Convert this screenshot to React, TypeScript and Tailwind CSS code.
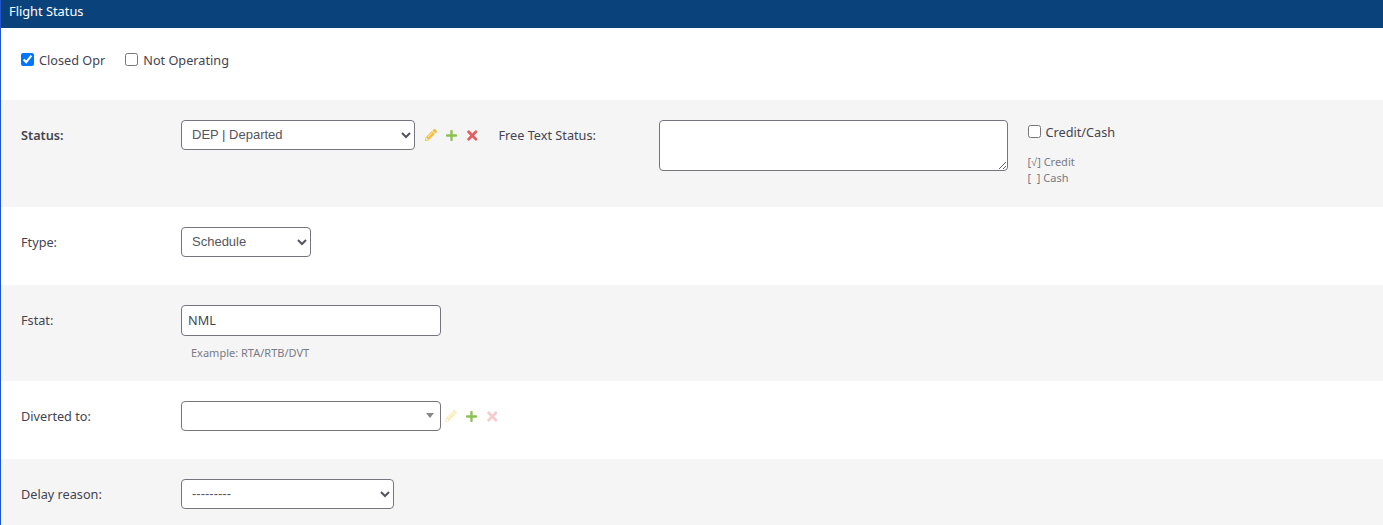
import { FaPencilAlt, FaPlus, FaTimes } from "react-icons/fa";

const labelCls = "w-[160px] shrink-0 text-[12.7px] leading-[20px] text-[#444450]";
const selectCls =
  "h-[30px] rounded-[4px] border border-[#76757f] bg-white pl-[6px] pb-[2px] text-[13px] text-[#555560] font-['Liberation_Sans',sans-serif]";

const RowIcons = ({ faded }: { faded?: boolean }) => (
  <div className={`flex h-[30px] items-center ${faded ? "ml-[4px]" : "ml-[10px]"}`}>
    <FaPencilAlt className={`h-[12px] w-[12px] ${faded ? "text-[#f9eebc]" : "text-[#f0c040]"}`} />
    <FaPlus className="ml-[9px] h-[13px] w-[11px] text-[#8cc152]" />
    <FaTimes className={`ml-[10px] mt-[1px] h-[15px] w-[10.5px] ${faded ? "text-[#f6cccc]" : "text-[#e46060]"}`} />
  </div>
);

const App = () => {
  return (
    <div className="flex h-[525px] flex-col overflow-hidden border-l border-[#2255cc] bg-white font-['Noto_Sans',sans-serif] text-[#444450]">
      <div className="flex h-[28px] shrink-0 items-center bg-[#0a437c] pl-[8px] pb-[4px] text-[12.8px] text-white">
        Flight Status
      </div>

      {/* top checkboxes */}
      <div className="flex h-[72px] shrink-0 items-start gap-[20px] pl-[20px] pt-[24px] text-[12.7px]">
        <label className="flex items-center gap-[5px] leading-[16px]">
          <input type="checkbox" defaultChecked className="m-0 mb-[2px] h-[13px] w-[13px]" />
          Closed Opr
        </label>
        <label className="flex items-center gap-[5px] leading-[16px]">
          <input type="checkbox" className="m-0 mb-[2px] h-[13px] w-[13px]" />
          Not Operating
        </label>
      </div>

      {/* status */}
      <div className="flex h-[107px] shrink-0 items-start bg-[#f5f5f5] pl-[20px] pt-[20px]">
        <div className={`${labelCls} pt-[5px] font-semibold`}>Status:</div>
        <select defaultValue="DEP" className={`${selectCls} w-[234px]`}>
          <option value="DEP">DEP | Departed</option>
        </select>
        <RowIcons />
        <div className="ml-[21px] w-[160px] pt-[5px] text-[12.7px] leading-[20px]">Free Text Status:</div>
        <textarea className="h-[51px] w-[349px] rounded-[4px] border border-[#76757f] bg-white" />
        <div className="ml-[20px] pt-[2px]">
          <label className="flex items-center gap-[5px] text-[12.7px] leading-[20px]">
            <input type="checkbox" className="m-0 mb-[2px] h-[13px] w-[13px]" />
            Credit/Cash
          </label>
          <div className="mt-[12px] text-[11px] leading-[16px] text-[#7a7a85]">
            <div>[√] Credit</div>
            <div>[ &nbsp;] Cash</div>
          </div>
        </div>
      </div>

      {/* ftype */}
      <div className="flex h-[78px] shrink-0 items-start pl-[20px] pt-[20px]">
        <div className={`${labelCls} pt-[5px]`}>Ftype:</div>
        <select defaultValue="Schedule" className={`${selectCls} w-[130px]`}>
          <option>Schedule</option>
        </select>
      </div>

      {/* fstat */}
      <div className="flex h-[96px] shrink-0 items-start bg-[#f5f5f5] pl-[20px] pt-[20px]">
        <div className={`${labelCls} pt-[5px]`}>Fstat:</div>
        <div>
          <input
            type="text"
            defaultValue="NML"
            className="h-[31px] w-[260px] rounded-[4px] border border-[#76757f] bg-white px-[6px] pb-[1px] text-[12.7px] text-[#444450]"
          />
          <div className="mt-[9px] pl-[10px] text-[11px] leading-[16px] text-[#7a7a85]">Example: RTA/RTB/DVT</div>
        </div>
      </div>

      {/* diverted */}
      <div className="flex h-[78px] shrink-0 items-start pl-[20px] pt-[20px]">
        <div className={`${labelCls} pt-[5px]`}>Diverted to:</div>
        <div className="relative h-[30px] w-[260px] rounded-[4px] border border-[#76757f] bg-white">
          <span className="absolute right-[6px] top-[11px] h-0 w-0 border-x-[4px] border-t-[5px] border-x-transparent border-t-[#888888]" />
        </div>
        <RowIcons faded />
      </div>

      {/* delay */}
      <div className="flex flex-1 items-start bg-[#f5f5f5] pl-[20px] pt-[20px]">
        <div className={`${labelCls} pt-[5px]`}>Delay reason:</div>
        <select defaultValue="" className={`${selectCls} w-[213px]`}>
          <option value="">---------</option>
        </select>
      </div>
    </div>
  );
};

export default App;
